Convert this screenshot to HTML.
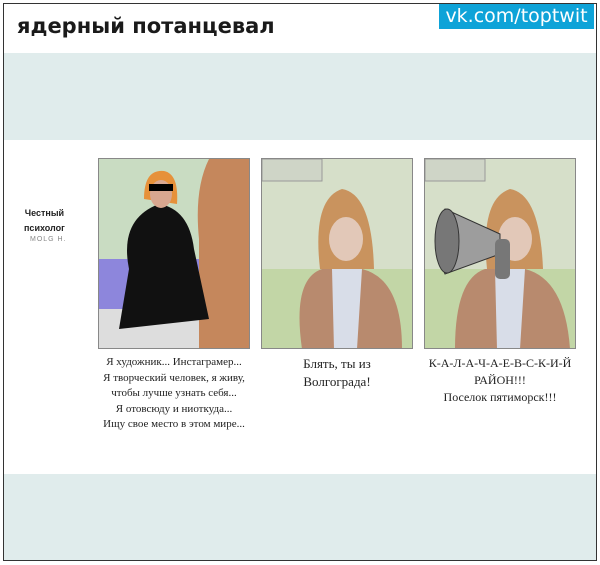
<!DOCTYPE html>
<html><head><meta charset="utf-8"><style>
body{margin:0;width:600px;height:565px;background:#fff;position:relative;overflow:hidden;font-family:"Liberation Sans","DejaVu Sans",sans-serif}
.frame{position:absolute;left:3px;top:3px;width:594px;height:558px;border:1px solid #333;box-sizing:border-box}
.title{position:absolute;left:17px;top:14px;font-size:21px;font-weight:bold;color:#1a1a1a;font-family:"DejaVu Sans",sans-serif}
.vk{position:absolute;left:439px;top:4px;width:155px;height:25px;background:#0ea3d8;color:#fff;font-size:19px;line-height:25px;text-align:center;font-family:"DejaVu Sans",sans-serif}
.band{position:absolute;left:4px;width:592px;background:#e0ecec}
.panel{position:absolute;top:158px;width:152px;height:191px;border:1px solid #888;box-sizing:border-box;overflow:hidden}
.cap{position:absolute;text-align:center;font-family:"Liberation Serif",serif;color:#222}
</style></head><body>
<div class="frame"></div>
<div class="title">ядерный потанцевал</div>
<div class="vk">vk.com/toptwit</div>
<div class="band" style="top:53px;height:87px"></div>
<div class="band" style="top:474px;height:86px"></div>
<div style="position:absolute;left:24px;top:206px;font-size:9px;font-weight:bold;text-align:center;line-height:15px;color:#222">Честный<br>психолог</div>
<div style="position:absolute;left:30px;top:236px;font-size:7px;color:#888;letter-spacing:1px">MOLG H.</div>

<div class="panel" style="left:98px;background:#c9dcc2">
<svg width="152" height="191" viewBox="0 0 152 191">
<rect x="0" y="100" width="130" height="91" fill="#8d86dc"/>
<rect x="0" y="150" width="100" height="41" fill="#ddd"/>
<path d="M110 0 Q95 30 100 80 L100 191 L152 191 L152 0Z" fill="#c5875c"/>
<path d="M30 110 Q20 60 60 45 Q90 50 95 90 L110 160 L20 170Z" fill="#111"/>
<path d="M45 40 Q45 10 65 12 Q80 15 78 45Z" fill="#e6913a"/>
<ellipse cx="62" cy="35" rx="11" ry="14" fill="#d8a790"/>
<rect x="50" y="25" width="24" height="7" fill="#000"/>
</svg></div>

<div class="panel" style="left:261px;background:#d6dfc9">
<svg width="152" height="191" viewBox="0 0 152 191">
<rect x="0" y="0" width="60" height="22" fill="#cfd5c7" stroke="#999"/>
<rect x="0" y="110" width="152" height="81" fill="#c2d6a6"/>
<path d="M40 190 Q30 120 60 110 L100 110 Q140 120 140 190Z" fill="#b88a6e"/>
<path d="M70 110 L100 110 L95 190 L72 190Z" fill="#d8dde8"/>
<path d="M58 110 Q50 40 80 30 Q110 35 112 110Z" fill="#c9935e"/>
<ellipse cx="84" cy="80" rx="17" ry="22" fill="#e2c8b8"/>
</svg></div>

<div class="panel" style="left:424px;background:#d6dfc9">
<svg width="152" height="191" viewBox="0 0 152 191">
<rect x="0" y="0" width="60" height="22" fill="#cfd5c7" stroke="#999"/>
<rect x="0" y="110" width="152" height="81" fill="#c2d6a6"/>
<path d="M30 190 Q30 120 60 110 L100 110 Q140 120 145 190Z" fill="#b88a6e"/>
<path d="M70 110 L100 110 L95 190 L72 190Z" fill="#d8dde8"/>
<path d="M62 110 Q55 40 85 30 Q115 35 118 110Z" fill="#c9935e"/>
<ellipse cx="90" cy="80" rx="17" ry="22" fill="#e2c8b8"/>
<path d="M20 50 Q5 80 20 115 L75 95 L75 75Z" fill="#9d9d9d" stroke="#333"/>
<ellipse cx="22" cy="82" rx="12" ry="32" fill="#777" stroke="#333"/>
<rect x="70" y="80" width="15" height="40" rx="5" fill="#777"/>
</svg></div>

<div class="cap" style="left:84px;top:355px;width:180px;font-size:11px;line-height:15.5px">Я художник... Инстаграмер...<br>Я творческий человек, я живу,<br>чтобы лучше узнать себя...<br>Я отовсюду и ниоткуда...<br>Ищу свое место в этом мире...</div>
<div class="cap" style="left:261px;top:355px;width:152px;font-size:13px;line-height:18px">Блять, ты из<br>Волгограда!</div>
<div class="cap" style="left:416px;top:355px;width:168px;font-size:12px;line-height:17px">К-А-Л-А-Ч-А-Е-В-С-К-И-Й<br>РАЙОН!!!<br>Поселок пятиморск!!!</div>
</body></html>
